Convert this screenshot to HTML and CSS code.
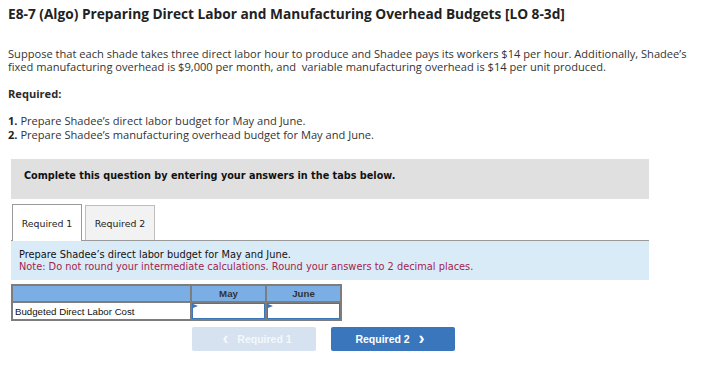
FILE: index.html
```
<!doctype html>
<html lang=en>
<head>
	<title>E8-7 (Algo)</title>
	<link rel="stylesheet" href="styles.css">
</head>

<body>
	<h1 class=title>E8-7 (Algo) Preparing Direct Labor and Manufacturing Overhead Budgets [LO 8-3d]</h1>

	<p class=intro>Suppose that each shade takes three direct labor hour to produce and Shadee pays its workers $14 per hour. Additionally, Shadee’s fixed manufacturing overhead is $9,000 per month, and &nbsp;variable manufacturing overhead is $14 per unit produced.</p>

	<p class=required>Required:</p>
	<ol class=steps>
		<li><b>1.</b> Prepare Shadee’s direct labor budget for May and June.</li>
		<li><b>2.</b> Prepare Shadee’s manufacturing overhead budget for May and June.</li>
	</ol>

	<section class=question>
		<div class=banner>Complete this question by entering your answers in the tabs below.</div>

		<nav class=tabs>
			<button class="tab active">Required 1</button>
			<button class=tab>Required 2</button>
		</nav>

		<div class=panel>
			Prepare Shadee’s direct labor budget for May and June.<br>
			<span class=note>Note: Do not round your intermediate calculations. Round your answers to 2 decimal places.</span>
		</div>

		<table class=budget>
			<tr>
				<th></th>
				<th>May</th>
				<th>June</th>
			</tr>
			<tr>
				<td>Budgeted Direct Labor Cost</td>
				<td class=cell><input type=text></td>
				<td class=cell><input type=text></td>
			</tr>
		</table>

		<div class=pager>
			<button class="nav prev" disabled><span class=arrow>‹</span> Required 1</button>
			<button class="nav next">Required 2 <span class=arrow>›</span></button>
		</div>
	</section>
</body>
</html>
```

FILE: styles.css
```
html, body {
	margin: 0;
	background: #fff;
}

body {
	padding: 6px 8px 0 8px;
	color: #2b2b2b;
	font-family: "Open Sans", Lato, sans-serif;
}

.title {
	margin: 0;
	font-size: 13.7px;
	font-weight: 700;
	line-height: 16px;
	color: #222;
}

.intro {
	margin: 25px 0 0;
	font-size: 11.1px;
	line-height: 13px;
	color: #333;
}

.required {
	margin: 14px 0 0;
	font-size: 11.1px;
	font-weight: 700;
	line-height: 13px;
}

.steps {
	list-style: none;
	margin: 14px 0 0;
	padding: 0;
	font-size: 11.1px;
	line-height: 14px;
	color: #333;

	& b {color: #222}
}

.question {
	width: 638px;
	margin: 17px 0 0 3px;
	font-family: "DejaVu Sans", Verdana, sans-serif;
}

.banner {
	background: #e0e0e0;
	height: 40px;
	box-sizing: border-box;
	padding: 11px 13px;
	font-size: 9.7px;
	font-weight: bold;
	line-height: 12px;
	color: #111;
}

.tabs {
	display: flex;
	gap: 3px;
	margin-top: 5px;
	padding-left: 1px;
	height: 36px;
	align-items: flex-end;
}

.tab {
	height: 35px;
	width: 70px;
	padding: 0;
	border: 1px solid #bdbdbd;
	border-bottom: none;
	background: #f2f2f2;
	font: 9.4px "DejaVu Sans", Verdana, sans-serif;
	color: #222;

	&.active {
		height: 37px;
		width: 70px;
		margin-bottom: -1px;
		background: #fff;
		border-color: #9a9a9a;
		position: relative;
	}
}

.panel {
	background: #daebf8;
	border-top: 1px solid #9a9a9a;
	height: 40px;
	box-sizing: border-box;
	padding: 8px 8px 0;
	font-size: 9.8px;
	line-height: 12px;
	color: #111;

	.note {color: #a3234d}
}

.budget {
	margin-top: 4px;
	border-collapse: collapse;
	font-family: "Liberation Sans", Arial, sans-serif;
	font-size: 9.7px;

	& th, & td {
		border: 2px solid #7d7d7d;
		padding: 0;
		height: 15px;
	}

	& th {
		background: #7aaee4;
		color: #333;
		font-weight: bold;
		width: 73px;
	}

	& th:first-child {width: 177px}

	& td {
		background: #fff;
		padding-left: 2px;
		color: #111;
	}

	.cell {
		padding: 0;
		position: relative;

		&::before {
			content: "";
			position: absolute;
			left: 1px;
			top: 1px;
			border-left: 5px solid #3a76bb;
			border-top: 2px solid transparent;
			border-bottom: 2px solid transparent;
		}
	}

	& input {
		display: block;
		width: 100%;
		height: 16px;
		box-sizing: border-box;
		border: 1px solid #3a76bb;
		margin: 0;
		padding: 0;
	}
}

.pager {
	display: flex;
	gap: 15px;
	margin: 6px 0 0 181px;
}

.nav {
	width: 124px;
	height: 24px;
	border: none;
	border-radius: 2px;
	font: bold 10.5px "Liberation Sans", Arial, sans-serif;
	color: #fff;
	background: #3a76bb;

	.arrow {
		font-size: 18px;
		line-height: 10px;
		margin: 0 6px;
		vertical-align: -1px;
	}

	&.prev {
		background: #d6e2f0;
		color: #f4f7fb;
	}
}
```
